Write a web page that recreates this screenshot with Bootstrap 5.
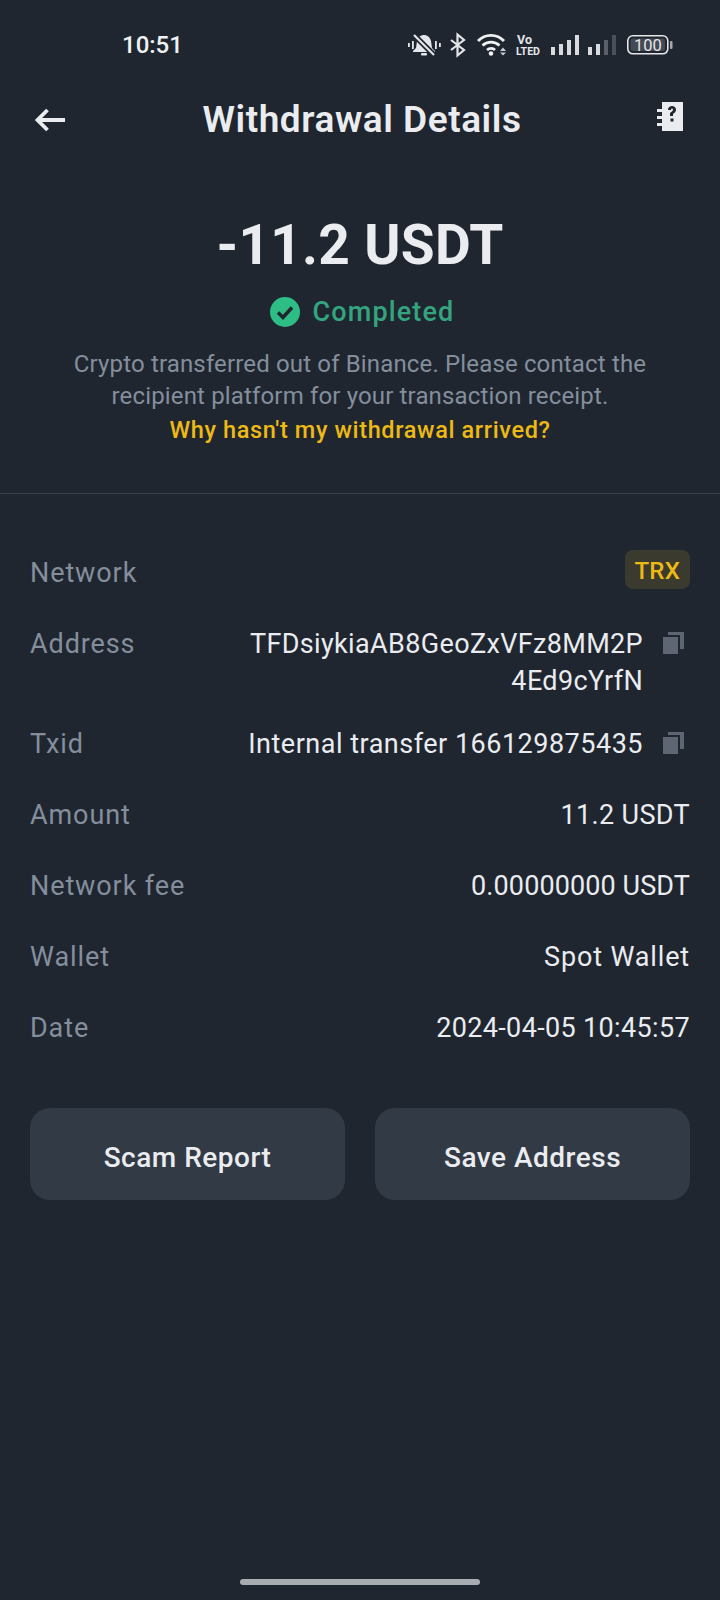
<!DOCTYPE html>
<html lang="en"><head><meta charset="utf-8">
<link href="https://cdn.jsdelivr.net/npm/bootstrap@5.3.0/dist/css/bootstrap.min.css" rel="stylesheet">
<style>
html,body{background:#1f2630;margin:0}
.screen{width:720px;height:1600px;background:#1f2630;font-family:Roboto,"Noto Sans",sans-serif;color:#eaecef;position:relative;overflow:hidden}
.sbar{height:90px;padding:0 46px 0 122px}
.clock{font-size:24px;font-weight:500;color:#f0f1f3}
.sicons{width:266px;height:32px;display:block}
.topbar{height:60px;padding:0 36px 0 34px}
.bookic{margin-top:-6px}
.ttl{font-size:37px;font-weight:600;color:#eaecef;letter-spacing:.55px;margin:0 0 0 4px;line-height:60px}
.hero{padding-top:63px}
.amt{font-size:55px;font-weight:700;line-height:64px;color:#eaecef;letter-spacing:.3px}
.stat{font-size:27px;font-weight:500;color:#33a47d;letter-spacing:1.15px;line-height:36px;margin-top:17px;gap:12px;padding-left:5px}
.desc{font-size:24px;line-height:32px;color:#848e9c;margin-top:18px;letter-spacing:.15px}
.whyl{font-size:23.5px;line-height:34px;font-weight:500;color:#edb914;letter-spacing:.63px;margin-top:1px}
.rule{height:1px;background:#3a414c;margin-top:46px}
.rows{padding:61px 30px 0;font-size:27px;line-height:37px;letter-spacing:.35px}
.rw{margin-bottom:34px;gap:20px}
.rw-two{margin-bottom:26px}
.lbl{color:#848e9c;white-space:nowrap;letter-spacing:.9px}
.val{color:#eaecef;text-align:right}
.addr{width:398px;word-break:break-all}
.val-txid{letter-spacing:.5px}
.val-fee{letter-spacing:.1px}
.val-wallet{letter-spacing:.85px}
.cpy{width:22px;height:24px;flex:none;margin:5px 5px 0 20px}
.tag{background:#3b3a2f;color:#edb914;font-size:24px;border-radius:8px;padding:3px 10px 0;line-height:36px;font-weight:500;letter-spacing:.2px;margin-top:-5px;height:39px}
.acts{padding:27px 30px 0;gap:30px}
.actbtn{flex:1;height:92px;background:#323a45;border:0;border-radius:20px;color:#eaecef;font-size:28px;font-weight:500;letter-spacing:.5px;padding-top:14px}
.actbtn:hover{background:#323a45;color:#eaecef}
.hbar{position:absolute;left:240px;bottom:15px;width:240px;height:6px;border-radius:3px;background:#a9acb1}
</style></head><body>
<div class="screen">
<div class="sbar d-flex align-items-center justify-content-between">
<span class="clock">10:51</span>
<svg class="sicons" viewBox="0 -4 266 32" aria-hidden="true">
<g fill="#e4e6ea">
<path d="M9 8c1-4 4-6 7-6s6 2 7 6l1 7 3 3v1H5v-1l3-3z"/><rect x="13" y="20" width="6" height="2.500" rx="1"/>
<rect x="0" y="10" width="1.800" height="4"/><rect x="4" y="8" width="1.800" height="8"/><rect x="27" y="8" width="1.800" height="8"/><rect x="31" y="10" width="1.800" height="4"/>
</g>
<path d="M5 1l21 21" stroke="#1f2630" stroke-width="5.500"/><path d="M6 2l20 20" stroke="#e4e6ea" stroke-width="2.200"/>
<path d="M43 7l13 10-6.500 5.500V1.500L56 7 43 17" fill="none" stroke="#e4e6ea" stroke-width="2.200"/>
<path d="M70 8c7-7.500 19-7.500 26 0M74.500 12.500c5-4.500 12-4.500 17 0M79 17c2.500-2 6-2 8 0" fill="none" stroke="#f0f1f3" stroke-width="2.800"/>
<circle cx="83" cy="20.500" r="2.300" fill="#f0f1f3"/>
<path d="M92 18l3-3.500 3 3.500zM92 19.500h6l-3 3z" fill="#c9ccd1"/>
<text x="109" y="10.500" font-size="12.500" font-weight="700" fill="#e4e6ea" font-family="Roboto">Vo</text>
<text x="108" y="22" font-size="11.500" font-weight="700" fill="#e4e6ea" font-family="Roboto" textLength="24" lengthAdjust="spacingAndGlyphs">LTED</text>
<g fill="#d8dade"><rect x="143" y="14" width="4" height="8"/><rect x="151" y="11" width="4" height="11"/><rect x="159" y="7" width="4" height="15"/><rect x="167" y="2" width="4" height="20"/></g>
<g><rect x="180" y="14" width="4" height="8" fill="#d8dade"/><rect x="188" y="11" width="4" height="11" fill="#d8dade"/><rect x="196" y="7" width="4" height="15" fill="#5a606a"/><rect x="204" y="2" width="4" height="20" fill="#4a505a"/></g>
<rect x="219.800" y="2.800" width="40" height="18" rx="5" fill="none" stroke="#e4e6ea" stroke-width="1.600"/>
<rect x="222.500" y="5.500" width="34.500" height="12.500" rx="2.500" fill="#444a54"/>
<rect x="262" y="8" width="2.500" height="8" rx="1" fill="#a4a8ae"/>
<text x="239.800" y="17.800" text-anchor="middle" font-size="16.500" fill="#e4e6ea" font-family="Roboto">100</text>
</svg>
</div>
<div class="topbar d-flex align-items-center justify-content-between">
<svg width="32" height="28" viewBox="0 0 32 28" aria-hidden="true"><path d="M31 14H4M13.500 4 3.500 14l10 10" fill="none" stroke="#eaecef" stroke-width="3.800"/></svg>
<h1 class="ttl">Withdrawal Details</h1>
<svg class="bookic" width="30" height="32" viewBox="0 0 30 32" aria-hidden="true"><path fill="#eaecef" fill-rule="evenodd" d="M8 1h21v29H8v-5H3v-3h5v-4H3v-3h5v-4H3V8h5zm6 8c0-3 2-4 4-4s4 1 4 4c0 2-2 3-3 4v2h-3v-3c1-1 3-2 3-3s-.5-1.500-1-1.500-1 .5-1 1.500zm2.500 8.500h3v3h-3z"/></svg>
</div>
<div class="hero text-center">
<div class="amt">-11.2 USDT</div>
<div class="stat d-flex justify-content-center align-items-center">
<svg width="30" height="30" viewBox="0 0 30 30" aria-hidden="true"><circle cx="15" cy="15" r="15" fill="#2ebd85"/><path d="M8 15.500l5 5 9-10" fill="none" stroke="#1f2630" stroke-width="3.600"/></svg>
<span>Completed</span></div>
<div class="desc">Crypto transferred out of Binance. Please contact the<br>recipient platform for your transaction receipt.</div>
<div class="whyl">Why hasn't my withdrawal arrived?</div>
</div>
<div class="rule"></div>
<div class="rows">
<div class="rw d-flex justify-content-between"><span class="lbl">Network</span><span class="tag">TRX</span></div>
<div class="rw rw-two d-flex justify-content-between"><span class="lbl">Address</span><span class="d-flex"><span class="val addr">TFDsiykiaAB8GeoZxVFz8MM2P 4Ed9cYrfN</span><svg class="cpy" viewBox="0 0 22 24"><path fill="#5e6673" d="M0 6h15v17H0zM5 1h16v17h-4V4H5z"/></svg></span></div>
<div class="rw d-flex justify-content-between"><span class="lbl">Txid</span><span class="d-flex"><span class="val val-txid">Internal transfer 166129875435</span><svg class="cpy" viewBox="0 0 22 24"><path fill="#5e6673" d="M0 6h15v17H0zM5 1h16v17h-4V4H5z"/></svg></span></div>
<div class="rw d-flex justify-content-between"><span class="lbl">Amount</span><span class="val">11.2 USDT</span></div>
<div class="rw d-flex justify-content-between"><span class="lbl">Network fee</span><span class="val val-fee">0.00000000 USDT</span></div>
<div class="rw d-flex justify-content-between"><span class="lbl">Wallet</span><span class="val val-wallet">Spot Wallet</span></div>
<div class="rw d-flex justify-content-between"><span class="lbl">Date</span><span class="val">2024-04-05 10:45:57</span></div>
</div>
<div class="acts d-flex">
<button class="btn actbtn">Scam Report</button>
<button class="btn actbtn">Save Address</button>
</div>
<div class="hbar"></div>
</div>
<script src="https://cdn.jsdelivr.net/npm/bootstrap@5.3.0/dist/js/bootstrap.bundle.min.js"></script>
</body></html>
